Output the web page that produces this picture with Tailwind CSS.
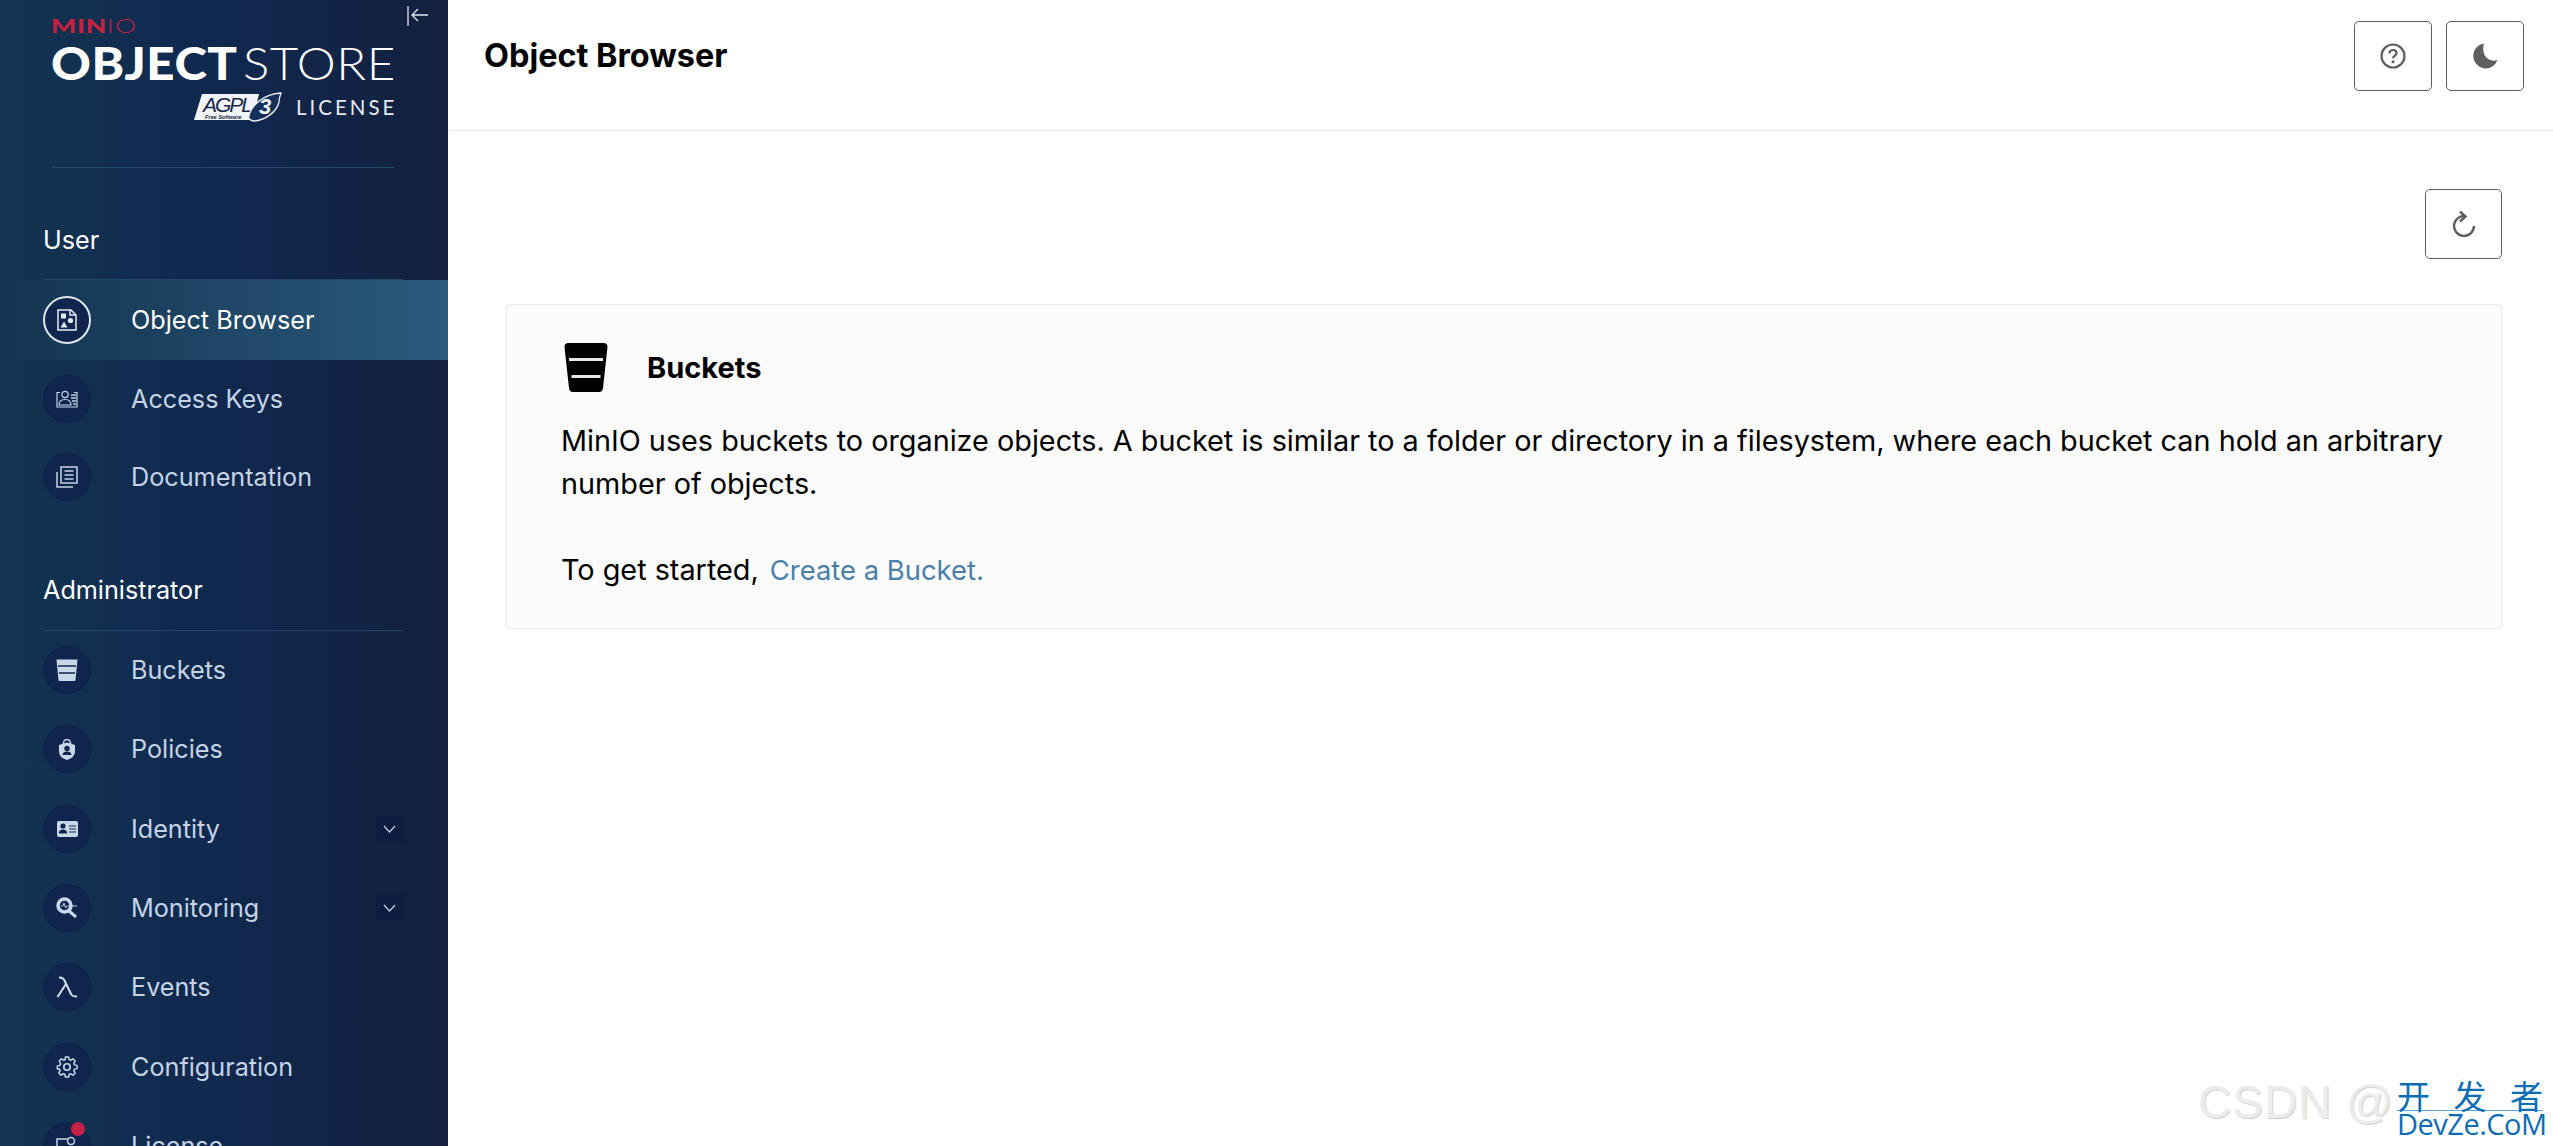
<!DOCTYPE html>
<html lang="en">
  <head>
    <meta charset="UTF-8" />
    <title>MinIO Console</title>
    <script src="https://cdn.jsdelivr.net/npm/@tailwindcss/browser@4"></script>
  </head>
  <body class="relative h-[1146px] w-[2553px] overflow-hidden bg-white flex font-['Inter',sans-serif] text-black">
    <!-- Sidebar -->
    <aside class="w-[448px] h-[1146px] shrink-0 overflow-hidden bg-linear-to-r from-[#133450] via-[#10294f] via-45% to-[#13203f] text-[#c4d3e6] text-[25.2px]">
      <div class="relative h-[167px] pl-[51px] pt-[18px]">
        <svg class="absolute left-[407px] top-[5px]" width="22" height="22" viewBox="0 0 22 22" fill="none" stroke="#dfe6ee" stroke-width="1.3"><path d="M1 1v20M21 10H5M11 4l-6 6 6 6"/></svg>
        <div class="flex items-center h-[15px] origin-left scale-x-[1.36] text-[#c8203f] text-[19.5px] leading-[15px] tracking-[0.5px]"><span class="font-black font-['Lato',sans-serif]">MIN</span><span class="font-light font-['Lato',sans-serif] tracking-[1px]">IO</span></div>
        <div class="flex items-center mt-[10px] h-[40px] w-[345px] justify-between text-white text-[46px] leading-[40px]">
          <span class="font-black font-['Lato',sans-serif] origin-left scale-x-[1.07] tracking-[0.5px]">OBJECT</span>
          <span class="font-light font-['Lato',sans-serif] origin-right scale-x-[1.07] tracking-[0.5px]">STORE</span>
        </div>
        <div class="flex items-center mt-[9px] ml-[142px] h-[30px]">
          <svg width="90" height="30" viewBox="0 0 90 30">
            <path d="M9 2H66L60 28H1z" fill="#f2f4f7"/>
            <text x="10" y="20" font-family="Liberation Sans" font-size="21" font-weight="400" font-style="italic" fill="#16294a" textLength="50">AGPL</text>
            <text x="12" y="27" font-family="Liberation Sans" font-size="5.5" font-weight="700" font-style="italic" fill="#16294a">Free Software</text>
            <path d="M56 24C58 14 70 2 88 1c-1 3-2 6-2 9-2 10-14 18-24 19-4 0-7-2-6-5z" fill="#17305a" stroke="#e8edf3" stroke-width="1.3"/>
            <text x="66" y="22" font-family="Liberation Sans" font-size="22" font-weight="700" font-style="italic" fill="#f2f4f7">3</text>
          </svg>
          <span class="ml-[13px] text-[20.5px] leading-[30px] text-[#e6ebf1] font-['Lato',sans-serif] tracking-[3px]">LICENSE</span>
        </div>
      </div>
      <div class="ml-[52px] w-[342px] h-px bg-[#234a6c]"></div>

      <div class="ml-[43px] w-[360px] h-[112px] flex items-end pb-[23px] border-b border-[#1f4668] text-white leading-[32px]">User</div>
      <a class="flex items-center h-[80px] pl-[43px] text-white bg-linear-to-r from-[#133450] to-[#2c5a7c]">
        <span class="flex items-center justify-center w-[48px] h-[48px] rounded-full bg-[#10264f] border-2 border-[#dfe6ee]">
          <svg width="20" height="22" viewBox="0 0 20 22" fill="none" stroke="#e6ebf1" stroke-width="1.5"><path d="M1 1h13l5 5v15H1z"/><path d="M13 1v5h6" /><rect x="4" y="4.5" width="5" height="5" fill="#e6ebf1" stroke="none"/><circle cx="13.5" cy="11.5" r="2.6" fill="#e6ebf1" stroke="none"/><path d="M7 12.5l3.5 6h-7z" fill="#e6ebf1" stroke="none"/></svg>
        </span>
        <span class="ml-[40px] leading-[32px]">Object Browser</span>
      </a>
      <a class="flex items-center h-[77px] pl-[43px]">
        <span class="flex items-center justify-center w-[48px] h-[48px] rounded-full bg-[#10264f] border border-[#0e2145]">
          <svg width="22" height="18" viewBox="0 0 22 18" fill="none" stroke="#c4d3e6" stroke-width="1.2"><path d="M4 2.500H1v14.500h20V2.500h-3"/><circle cx="9" cy="4.500" r="3.200"/><path d="M3 15c0-4 2.500-5.500 6-5.500s6 1.500 6 5.500z"/><path d="M15 5h5M15 8h5M16 11h4M17 14h3" stroke-width="1.600"/></svg>
        </span>
        <span class="ml-[40px] leading-[32px]">Access Keys</span>
      </a>
      <a class="flex items-center h-[79px] pl-[43px]">
        <span class="flex items-center justify-center w-[48px] h-[48px] rounded-full bg-[#10264f] border border-[#0e2145]">
          <svg width="22" height="22" viewBox="0 0 22 22" fill="none" stroke="#c4d3e6" stroke-width="1.5"><path d="M1 6v15h16"/><rect x="5" y="1" width="16" height="16"/><path d="M8.500 5h9M8.500 9h9M8.500 13h9"/></svg>
        </span>
        <span class="ml-[40px] leading-[32px]">Documentation</span>
      </a>

      <div class="ml-[43px] w-[360px] h-[115px] flex items-end pb-[24px] border-b border-[#1f4668] text-white leading-[32px]">Administrator</div>
      <a class="flex items-center h-[78px] pl-[43px]">
        <span class="flex items-center justify-center w-[48px] h-[48px] rounded-full bg-[#10264f] border border-[#0e2145]">
          <svg width="22" height="22" viewBox="0 0 22 22"><path d="M0.500 0.500h21l-2 20.500q-.1 1-1 1H3.500q-.9 0-1-1z" fill="#c9d8e8"/><path d="M2 7h18M3 14h16" stroke="#10264f" stroke-width="1.6"/></svg>
        </span>
        <span class="ml-[40px] leading-[32px]">Buckets</span>
      </a>
      <a class="flex items-center h-[80px] pl-[43px]">
        <span class="flex items-center justify-center w-[48px] h-[48px] rounded-full bg-[#10264f] border border-[#0e2145]">
          <svg width="16" height="21" viewBox="0 0 16 21"><path d="M4.500 6V4a3.500 3.500 0 0 1 7 0v2" fill="none" stroke="#c9d8e8" stroke-width="1.500"/><path d="M8 3.500l8 2.500v7q0 5-8 8-8-3-8-8V6z" fill="#c9d8e8"/><circle cx="8" cy="9.500" r="2.700" fill="#10264f"/><path d="M3.500 16c0-2.500 2-3.500 4.500-3.500s4.500 1 4.500 3.500z" fill="#10264f"/></svg>
        </span>
        <span class="ml-[40px] leading-[32px]">Policies</span>
      </a>
      <a class="flex items-center h-[79px] pl-[43px]">
        <span class="flex items-center justify-center w-[48px] h-[48px] rounded-full bg-[#10264f] border border-[#0e2145]">
          <svg width="21" height="16" viewBox="0 0 21 16"><rect width="21" height="16" rx="2" fill="#c9d8e8"/><circle cx="6" cy="5" r="2.600" fill="#10264f"/><path d="M1.800 12.500c0-3 2-4 4.200-4s4.200 1 4.200 4z" fill="#10264f"/><path d="M12 5h7M12 8h7M12 11h7" stroke="#10264f" stroke-width="1.200"/></svg>
        </span>
        <span class="ml-[40px] leading-[32px]">Identity</span>
        <span class="ml-auto mr-[45px] flex items-center justify-center w-[27px] h-[27px] rounded-[3px] bg-[#0e1c40]">
          <svg width="13" height="8" viewBox="0 0 13 8" fill="none" stroke="#c4d3e6" stroke-width="1.200"><path d="M1 1l5.500 6L12 1"/></svg>
        </span>
      </a>
      <a class="flex items-center h-[79px] pl-[43px]">
        <span class="flex items-center justify-center w-[48px] h-[48px] rounded-full bg-[#10264f] border border-[#0e2145]">
          <svg width="22" height="21" viewBox="0 0 22 21" fill="none"><circle cx="8.500" cy="8.500" r="6.500" stroke="#c9d8e8" stroke-width="3.500"/><path d="M13 14l7 6" stroke="#c9d8e8" stroke-width="3"/><path d="M5 9h2l1-3 1.500 5 1-2H21" stroke="#c9d8e8" stroke-width="0.900"/></svg>
        </span>
        <span class="ml-[40px] leading-[32px]">Monitoring</span>
        <span class="ml-auto mr-[45px] flex items-center justify-center w-[27px] h-[27px] rounded-[3px] bg-[#0e1c40]">
          <svg width="13" height="8" viewBox="0 0 13 8" fill="none" stroke="#c4d3e6" stroke-width="1.200"><path d="M1 1l5.500 6L12 1"/></svg>
        </span>
      </a>
      <a class="flex items-center h-[80px] pl-[43px]">
        <span class="flex items-center justify-center w-[48px] h-[48px] rounded-full bg-[#10264f] border border-[#0e2145]">
          <svg width="22" height="22" viewBox="0 0 22 22" fill="none" stroke="#d3dfec" stroke-width="2"><path d="M3 1.500c4 0 5 1.500 6.500 5L15 18c.8 2 2 2.500 6 2.500"/><path d="M10 8L1.500 21"/></svg>
        </span>
        <span class="ml-[40px] leading-[32px]">Events</span>
      </a>
      <a class="flex items-center h-[79px] pl-[43px]">
        <span class="flex items-center justify-center w-[48px] h-[48px] rounded-full bg-[#10264f] border border-[#0e2145]">
          <svg width="22" height="22" viewBox="0 0 24 24" fill="none" stroke="#c9d8e8" stroke-width="1.800" stroke-linejoin="round"><circle cx="12" cy="12" r="3.500"/><path d="M10 1h4l.6 3.200 2 .9L19.400 3.300l2.800 2.800-1.800 2.800.9 2 3.200.6v4l-3.200.6-.9 2 1.800 2.800-2.800 2.800-2.800-1.800-2 .9-.6 3.200h-4l-.6-3.200-2-.9-2.800 1.800-2.800-2.800 1.800-2.800-.9-2L0 16.100v-4l3.200-.6.900-2L2.300 6.100 5.100 3.300l2.800 1.800 2-.9z" transform="translate(12 12) scale(.88) translate(-12 -13.500)"/></svg>
        </span>
        <span class="ml-[40px] leading-[32px]">Configuration</span>
      </a>
      <a class="flex items-center h-[79px] pl-[43px]">
        <span class="relative flex items-center justify-center w-[48px] h-[48px] rounded-full bg-[#10264f] border border-[#0e2145]">
          <svg width="22" height="20" viewBox="0 0 22 20" fill="none" stroke="#c4d3e6" stroke-width="1.500"><path d="M12 3H1v12h20"/><circle cx="15" cy="5" r="3.500"/></svg>
          <span class="absolute left-[27px] top-[-1px] w-[14px] h-[14px] rounded-full bg-[#c32145]"></span>
        </span>
        <span class="ml-[40px] leading-[32px]">License</span>
      </a>
    </aside>

    <!-- Main -->
    <main class="flex-1 min-w-0 flex flex-col">
      <header class="h-[131px] flex items-center justify-between pl-[36px] pr-[29px] border-b border-[#eaeaea] pb-[1px]">
        <h1 class="text-[32.4px] font-bold leading-[40px] -mt-[18px]">Object Browser</h1>
        <div class="flex gap-[14px] -mt-[18px]">
          <button class="flex items-center justify-center w-[78px] h-[70px] rounded-[5px] border border-[#5e5e5e] bg-white">
            <svg width="26" height="26" viewBox="0 0 26 26" fill="none" stroke="#5e5e5e" stroke-width="2.200"><circle cx="13" cy="13" r="11.500"/><path d="M9.500 10.500c0-2.300 1.600-3.500 3.500-3.500s3.500 1.200 3.500 3.200c0 2.500-3.500 2.700-3.500 5"/><circle cx="13" cy="18.800" r="1.500" fill="#5e5e5e" stroke="none"/></svg>
          </button>
          <button class="flex items-center justify-center w-[78px] h-[70px] rounded-[5px] border border-[#5e5e5e] bg-white">
            <svg width="26" height="26" viewBox="0 0 26 26"><path d="M12 0.500a12.500 12.500 0 1 0 13.500 16.500C17 20 8.500 12 12 0.500z" fill="#5e5e5e"/></svg>
          </button>
        </div>
      </header>
      <section class="pl-[58px] pr-[51px] pt-[58px]">
        <div class="flex justify-end">
          <button class="flex items-center justify-center w-[77px] h-[70px] rounded-[5px] border border-[#5e5e5e] bg-white">
            <svg width="24" height="26" viewBox="0 0 24 26" fill="none" stroke="#5e5e5e" stroke-width="2.400"><path d="M13 5A10 10 0 1 0 22 15"/><path d="M8 0.500L13.500 5.500L8 10.500"/></svg>
          </button>
        </div>
        <div class="mt-[45px] h-[325px] rounded-[3px] border border-[#eaeaea] bg-[#fbfbfb] pl-[54px] pr-[40px] text-[28.8px] leading-[43px]">
          <div class="flex items-center h-[114px] pt-[10px]">
            <svg width="50" height="49" viewBox="0 0 43 49"><path d="M4 0h35q4 0 4 4l-4.500 41q-.3 4-4 4H8.500q-3.700 0-4-4L0 4q0-4 4-4z" fill="#000"/><path d="M4.500 16.500h34M7 33.500h29" stroke="#e8e8e8" stroke-width="3"/></svg>
            <span class="ml-[36px] font-bold text-[29px]">Buckets</span>
          </div>
          <p>MinIO uses buckets to organize objects. A bucket is similar to a folder or directory in a filesystem, where each bucket can hold an arbitrary number of objects.<br /><br />To get started, <a class="ml-[3px] text-[#4a7faa] text-[27.4px]">Create a Bucket.</a></p>
        </div>
      </section>
    </main>

    <!-- Watermark -->
    <div class="absolute left-[2198px] top-[1076px] whitespace-nowrap font-['Liberation_Sans','Noto_Sans_CJK_SC',sans-serif] text-[46px] leading-[52px] tracking-[1px] text-[#ececec] [text-shadow:1px_1px_1px_#cfcfcf]">CSDN @开发</div>
    <div class="absolute left-[2397px] top-[1080px] w-[146px] h-[58px] bg-white text-[#0c6cb6]">
      <div class="flex justify-between h-[31px] border-b border-[#56a7dc] font-['Noto_Sans_CJK_SC',sans-serif] text-[33px] leading-[30px]"><span>开</span><span>发</span><span>者</span></div>
      <div class="font-['Open_Sans',sans-serif] text-[29px] leading-[26px] tracking-[-0.5px] whitespace-nowrap">DevZe.CoM</div>
    </div>
  </body>
</html>
